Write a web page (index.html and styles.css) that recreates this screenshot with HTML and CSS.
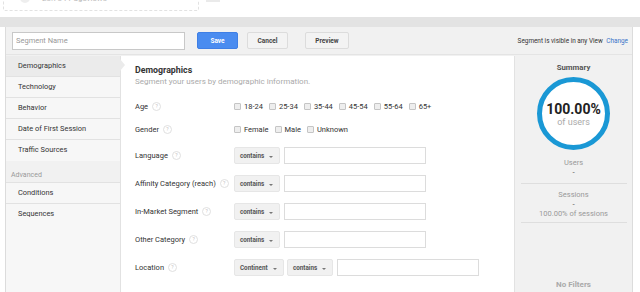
FILE: index.html
```html
<!DOCTYPE html>
<html>
<head>
<meta charset="utf-8">
<link rel="stylesheet" href="styles.css">
</head>
<body>
<div class="top">
  <div class="card"><span class="card-dot"></span><span class="card-text">28.784 Pageviews</span></div>
  <div class="mini"></div>
</div>
<div class="band"></div>
<div class="editor">
  <div class="toolbar">
    <input class="name" type="text" placeholder="Segment Name">
    <button class="btn save">Save</button>
    <button class="btn cancel">Cancel</button>
    <button class="btn preview">Preview</button>
    <div class="vis">Segment is visible in any View <a class="change">Change</a></div>
  </div>
  <div class="body">
    <div class="nav">
      <div class="item sel">Demographics</div>
      <div class="item">Technology</div>
      <div class="item">Behavior</div>
      <div class="item">Date of First Session</div>
      <div class="item last">Traffic Sources</div>
      <div class="adv">Advanced</div>
      <div class="item">Conditions</div>
      <div class="item fill">Sequences</div>
    </div>
    <div class="main">
      <span class="pointer"></span>
      <div class="title">Demographics</div>
      <div class="sub">Segment your users by demographic information.</div>
      <div class="row r-age">
        <div class="label">Age <span class="help">?</span></div>
        <div class="checks">
          <label class="ck"><span class="box"></span>18-24</label>
          <label class="ck"><span class="box"></span>25-34</label>
          <label class="ck"><span class="box"></span>35-44</label>
          <label class="ck"><span class="box"></span>45-54</label>
          <label class="ck"><span class="box"></span>55-64</label>
          <label class="ck"><span class="box"></span>65+</label>
        </div>
      </div>
      <div class="row r-gender">
        <div class="label">Gender <span class="help">?</span></div>
        <div class="checks">
          <label class="ck"><span class="box"></span>Female</label>
          <label class="ck"><span class="box"></span>Male</label>
          <label class="ck"><span class="box"></span>Unknown</label>
        </div>
      </div>
      <div class="row r-lang">
        <div class="label">Language <span class="help">?</span></div>
        <div class="sel-box">contains<span class="caret"></span></div>
        <div class="field"></div>
      </div>
      <div class="row r-n">
        <div class="label">Affinity Category (reach) <span class="help">?</span></div>
        <div class="sel-box">contains<span class="caret"></span></div>
        <div class="field"></div>
      </div>
      <div class="row r-n">
        <div class="label">In-Market Segment <span class="help">?</span></div>
        <div class="sel-box">contains<span class="caret"></span></div>
        <div class="field"></div>
      </div>
      <div class="row r-n">
        <div class="label">Other Category <span class="help">?</span></div>
        <div class="sel-box">contains<span class="caret"></span></div>
        <div class="field"></div>
      </div>
      <div class="row r-n">
        <div class="label">Location <span class="help">?</span></div>
        <div class="sel-box wide">Continent<span class="caret"></span></div>
        <div class="sel-box">contains<span class="caret"></span></div>
        <div class="field"></div>
      </div>
    </div>
    <div class="summary">
      <div class="s-title">Summary</div>
      <div class="ring">
        <div class="pct">100.00%</div>
        <div class="of">of users</div>
      </div>
      <div class="stat first">
        <div class="s-lbl">Users</div>
        <div class="s-val">-</div>
      </div>
      <div class="stat">
        <div class="s-lbl">Sessions</div>
        <div class="s-val">-</div>
        <div class="s-lbl">100.00% of sessions</div>
      </div>
      <div class="filters">No Filters</div>
    </div>
  </div>
</div>
</body>
</html>
```
FILE: styles.css
```css
html, body {
  margin: 0;
  padding: 0;
  background: #fff;
  font-family: Roboto, "Liberation Sans", Arial, sans-serif;
  color: #333;
  overflow: hidden;
  height: 292px;
}
.top {
  height: 17px;
  display: flex;
  align-items: flex-start;
  overflow: hidden;
}
.card {
  margin-left: 3px;
  margin-top: -10px;
  width: 196px;
  height: 21px;
  border: 1px dashed #e2e2e2;
  border-radius: 2px;
  display: flex;
  align-items: flex-start;
  box-sizing: border-box;
}
.card-dot {
  width: 10px;
  height: 10px;
  border-radius: 50%;
  background: #eee;
  margin-left: 16px;
  margin-top: 2px;
}
.card-text {
  margin-left: 12px;
  font-size: 8px;
  line-height: 10px;
  color: #bbb;
  margin-top: 3px;
}
.mini {
  margin-left: 7px;
  width: 14px;
  height: 2px;
  background: #eaeaea;
}
.band {
  height: 10px;
  background: #e3e3e3;
}
.editor {
  margin: 0 7px 0 5px;
  border-left: 1px solid #dcdcdc;
  border-right: 1px solid #dcdcdc;
  background: #f1f1f1;
}
.toolbar {
  height: 28px;
  display: flex;
  align-items: center;
  padding: 0 4px 0 6px;
  border-bottom: 1px solid #e4e4e4;
  box-sizing: border-box;
  margin-bottom: 1px;
}
.name {
  width: 173px;
  height: 18px;
  box-sizing: border-box;
  border: 1px solid #c8c8c8;
  background: #fff;
  font: 7.5px Roboto, "Liberation Sans", sans-serif;
  padding: 0 3px;
  margin: 0;
  outline: none;
}
.name::placeholder { color: #999; }
.btn {
  height: 17px;
  box-sizing: border-box;
  font: bold 6.5px Roboto, "Liberation Sans", sans-serif;
  border-radius: 2px;
  padding: 0;
  margin: 0;
}
.save {
  margin-left: 12px;
  width: 41px;
  background: #4a8cf0;
  border: 1px solid #3f7fe5;
  color: #fff;
}
.cancel {
  margin-left: 9px;
  width: 41px;
  background: #f3f3f3;
  border: 1px solid #dcdcdc;
  color: #444;
}
.preview {
  margin-left: 17px;
  width: 44px;
  background: #f3f3f3;
  border: 1px solid #dcdcdc;
  color: #444;
}
.vis {
  margin-left: auto;
  font-size: 6.4px;
  color: #333;
}
.change { color: #3b73c9; margin-left: 2px; }
.body {
  display: flex;
  height: 236px;
}
.nav {
  width: 114px;
  display: flex;
  flex-direction: column;
  background: #f1f1f1;
}
.item {
  height: 20px;
  line-height: 20px;
  padding-left: 12px;
  font-size: 7.4px;
  color: #333;
  background: #f7f7f7;
  border-bottom: 1px solid #e2e2e2;
}
.item.sel { background: #ebebeb; }
.item.last { border-bottom: none; height: 21px; }
.item.fill { flex: 1; border-bottom: none; line-height: 20px; }
.adv {
  font-size: 7px;
  color: #999;
  padding: 8px 0 0 5px;
  height: 13px;
  border-bottom: 1px solid #e2e2e2;
  line-height: 13px;
}
.main {
  flex: 1;
  background: #fff;
  padding: 8px 0 0 14px;
  position: relative;
  border-left: 1px solid #e2e2e2;
}
.pointer {
  position: absolute;
  left: -1px;
  top: 3px;
  width: 0;
  height: 0;
  border-top: 6px solid transparent;
  border-bottom: 6px solid transparent;
  border-left: 5px solid #ebebeb;
}
.title {
  font-size: 8.8px;
  font-weight: bold;
  line-height: 12px;
  color: #333;
}
.sub {
  font-size: 8px;
  color: #aaa;
  line-height: 12px;
  margin-bottom: 10px;
}
.row {
  display: flex;
  align-items: center;
  height: 17px;
}
.r-gender { margin-top: 6px; }
.r-lang { margin-top: 9px; }
.r-n { margin-top: 11px; }
.label {
  width: 99px;
  font-size: 7.5px;
  color: #333;
  display: flex;
  align-items: center;
  white-space: nowrap;
}
.help {
  display: inline-block;
  width: 7px;
  height: 7px;
  border: 1px solid #e0e0e0;
  border-radius: 50%;
  font-size: 5px;
  line-height: 7px;
  text-align: center;
  color: #c0c0c0;
  margin-left: 4px;
}
.checks {
  display: flex;
  align-items: center;
}
.ck {
  display: flex;
  align-items: center;
  font-size: 7.5px;
  color: #333;
  margin-right: 6px;
}
.box {
  width: 7px;
  height: 7px;
  box-sizing: border-box;
  border: 1px solid #c5c5c5;
  background: #eee;
  border-radius: 1px;
  margin-right: 3px;
}
.sel-box {
  width: 46px;
  height: 17px;
  box-sizing: border-box;
  background: #f1f1f1;
  border: 1px solid #e6e6e6;
  border-radius: 2px;
  font-size: 6.3px;
  font-weight: bold;
  color: #555;
  padding-left: 5px;
  display: flex;
  align-items: center;
  margin-right: 4px;
  position: relative;
}
.sel-box.wide { width: 50px; margin-right: 3px; }
.caret {
  position: absolute;
  right: 6px;
  top: 8px;
  border-left: 2px solid transparent;
  border-right: 2px solid transparent;
  border-top: 2px solid #777;
}
.field {
  width: 142px;
  height: 17px;
  box-sizing: border-box;
  border: 1px solid #dcdcdc;
  background: #fff;
}
.summary {
  width: 117px;
  background: #f1f1f1;
  border-left: 1px solid #e2e2e2;
  display: flex;
  flex-direction: column;
  align-items: center;
}
.s-title {
  font-size: 7.8px;
  font-weight: bold;
  color: #555;
  margin-top: 7px;
  line-height: 10px;
}
.ring {
  margin-top: 4px;
  width: 73px;
  height: 73px;
  box-sizing: border-box;
  border: 5px solid #1a98d5;
  border-radius: 50%;
  background: #fff;
  display: flex;
  flex-direction: column;
  align-items: center;
  justify-content: center;
}
.pct {
  font-size: 14px;
  font-weight: bold;
  color: #222;
  line-height: 15px;
  margin-top: 2px;
}
.of {
  font-size: 9px;
  color: #aaa;
  line-height: 11px;
}
.stat {
  width: 106px;
  text-align: center;
  border-bottom: 1px solid #dedede;
  padding-bottom: 3px;
}
.stat.first { margin-top: 8px; padding-bottom: 6px; }
.stat:not(.first) { padding-top: 6px; }
.s-lbl {
  font-size: 7.5px;
  color: #999;
  line-height: 10px;
}
.s-val {
  font-size: 8px;
  color: #555;
  line-height: 9px;
}
.filters {
  margin-top: auto;
  font-size: 8px;
  font-weight: bold;
  color: #aaa;
  line-height: 12px;
  margin-bottom: 1px;
}
```
